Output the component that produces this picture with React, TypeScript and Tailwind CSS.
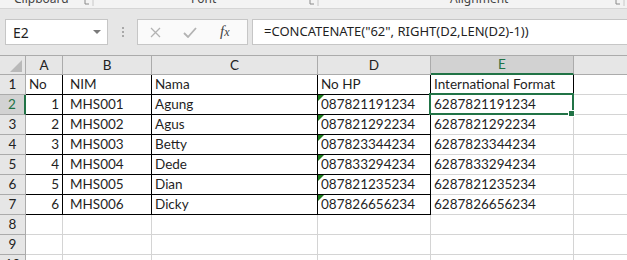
import React from 'react';

const cols = [
  { key: 'A', w: 37 },
  { key: 'B', w: 89 },
  { key: 'C', w: 166 },
  { key: 'D', w: 113 },
  { key: 'E', w: 143 },
];

const rows: string[][] = [
  ['No', 'NIM', 'Nama', 'No HP', 'International Format'],
  ['1', 'MHS001', 'Agung', '087821191234', '6287821191234'],
  ['2', 'MHS002', 'Agus', '087821292234', '6287821292234'],
  ['3', 'MHS003', 'Betty', '087823344234', '6287823344234'],
  ['4', 'MHS004', 'Dede', '087833294234', '6287833294234'],
  ['5', 'MHS005', 'Dian', '087821235234', '6287821235234'],
  ['6', 'MHS006', 'Dicky', '087826656234', '6287826656234'],
  ['', '', '', '', ''],
  ['', '', '', '', ''],
  ['', '', '', '', ''],
];

const Launcher = () => (
  <svg width="10" height="6" viewBox="0 0 10 6" className="shrink-0">
    <path d="M1 0 V4 H5" stroke="#8a8a8a" strokeWidth="1" fill="none" />
    <path d="M9 0 V6" stroke="#c8c8c8" strokeWidth="1" />
  </svg>
);

const Cell: React.FC<{ r: number; c: number; text: string }> = ({ r, c, text }) => {
  // black borders on A1:D7, plus right edge of E1
  const boxed = r <= 6 && c <= 3;
  const rightBlack = boxed || (r === 0 && c === 4);
  const bottomBlack = boxed;
  const numeric = c === 0 && r > 0;
  const bPad = c === 1 ? 'pl-[7px]' : 'pl-[3px]';
  return (
    <div
      className={`relative h-[20px] flex items-end pb-[2px] border-r border-b whitespace-nowrap overflow-visible ${numeric ? 'justify-end pr-[3px]' : bPad} ${rightBlack ? 'border-r-black' : 'border-r-[#d4d4d4]'} ${bottomBlack ? 'border-b-black' : 'border-b-[#d4d4d4]'}`}
    >
      {c === 3 && r >= 1 && r <= 6 && (
        <svg width="6" height="6" viewBox="0 0 6 6" className="absolute left-0 top-0">
          <polygon points="0,0 6,0 0,6" fill="#1d7a1d" />
        </svg>
      )}
      <span className="leading-[15px]">{text}</span>
      {c === 4 && r === 1 && (
        <>
          <div className="absolute z-10 -left-[2px] -top-[2px] -right-[1px] -bottom-[1px] border-2 border-[#217346] pointer-events-none" />
          <div className="absolute z-20 left-[137px] top-[15px] w-[7px] h-[7px] bg-[#217346] border border-white" />
        </>
      )}
    </div>
  );
};

export default function App() {
  return (
    <div className="w-[627px] h-[260px] overflow-hidden bg-white text-[#1f1f1f]" style={{ fontFamily: 'Lato, "Liberation Sans", sans-serif' }}>
      {/* ribbon group labels, clipped by the window edge */}
      <div className="h-[9px] bg-[#f3f3f3] border-b border-[#d5d5d5] overflow-hidden flex text-[12px] text-[#444]" style={{ fontFamily: '"Noto Sans", "Liberation Sans", sans-serif' }}>
        <div className="w-[96px] flex items-start justify-between pl-[14px] pr-[2px]">
          <span className="leading-[12px] -mt-[7px]">Clipboard</span>
          <Launcher />
        </div>
        <div className="w-[225px] flex items-start justify-between pl-[95px] pr-[2px]">
          <span className="leading-[12px] -mt-[7px]">Font</span>
          <Launcher />
        </div>
        <div className="flex-1 flex items-start justify-between pl-[129px] pr-[2px]">
          <span className="leading-[12px] -mt-[7px]">Alignment</span>
          <Launcher />
        </div>
      </div>

      {/* name box + formula bar */}
      <div className="h-[46px] bg-[#e6e6e6] pt-[10px] flex items-start">
        <div className="ml-[5px] w-[103px] h-[26px] bg-white border border-[#c6c6c6] flex items-center justify-between pl-[7px] pr-[6px] text-[14px]" style={{ fontFamily: '"Noto Sans", sans-serif' }}>
          <span>E2</span>
          <svg width="8" height="4" viewBox="0 0 8 4"><polygon points="0,0 8,0 4,4" fill="#7a7a7a" /></svg>
        </div>
        <div className="w-[29px] h-[26px] flex flex-col items-center justify-center gap-[2px]">
          <span className="w-[2px] h-[2px] bg-[#a8a8a8]" />
          <span className="w-[2px] h-[2px] bg-[#a8a8a8]" />
          <span className="w-[2px] h-[2px] bg-[#a8a8a8]" />
        </div>
        <div className="w-[111px] h-[26px] bg-[#fafafa] border border-[#c6c6c6] flex items-center pl-[12px] gap-[22px]">
          <svg width="11" height="11" viewBox="0 0 11 11"><path d="M1 1 L10 10 M10 1 L1 10" stroke="#b3b3b3" strokeWidth="1.3" /></svg>
          <svg width="14" height="11" viewBox="0 0 14 11"><path d="M1 6 L5 10 L13 1" stroke="#b3b3b3" strokeWidth="1.8" fill="none" /></svg>
          <span className="italic text-[15px] leading-[15px] text-[#444] ml-[1px]" style={{ fontFamily: '"Liberation Serif", serif' }}>
            f<span className="text-[12px]">x</span>
          </span>
        </div>
        <div className="ml-[4px] flex-1 h-[26px] bg-white border border-r-0 border-[#c6c6c6] flex items-center pl-[11px] text-[13px] whitespace-nowrap" style={{ fontFamily: '"Noto Sans", sans-serif' }}>
          =CONCATENATE("62", RIGHT(D2,LEN(D2)-1))
        </div>
      </div>

      {/* sheet grid */}
      <div className="grid text-[13.5px]" style={{ gridTemplateColumns: '26px 37px 89px 166px 113px 143px 1fr' }}>
        {/* header row */}
        <div className="h-[20px] bg-[#e6e6e6] border-t border-b border-r border-[#ababab] flex items-end justify-end pr-[3px] pb-[2px]">
          <svg width="12" height="12" viewBox="0 0 12 12"><polygon points="12,0 12,12 0,12" fill="#b9b9b9" /></svg>
        </div>
        {cols.map((c) =>
          c.key === 'E' ? (
            <div key={c.key} className="h-[20px] bg-[#d2d2d2] border-t border-t-[#ababab] border-r border-r-[#ababab] border-b-2 border-b-[#217346] flex items-center justify-center text-[#217346]">
              {c.key}
            </div>
          ) : (
            <div key={c.key} className="h-[20px] bg-[#e6e6e6] border-t border-b border-r border-[#ababab] flex items-center justify-center text-[#222]">
              {c.key}
            </div>
          )
        )}
        <div className="h-[20px] bg-[#e6e6e6] border-t border-b border-[#ababab]" />

        {rows.map((row, r) => (
          <React.Fragment key={r}>
            <div
              className={`h-[20px] flex items-center justify-center border-b border-b-[#ababab] ${r === 1 ? 'bg-[#d2d2d2] border-r-2 border-r-[#217346] text-[#217346]' : 'bg-[#e6e6e6] border-r border-r-[#ababab] text-[#222]'}`}
            >
              {r + 1}
            </div>
            {row.map((t, c) => (
              <Cell key={c} r={r} c={c} text={t} />
            ))}
            <div className="h-[20px] border-b border-[#d4d4d4]" />
          </React.Fragment>
        ))}
      </div>
    </div>
  );
}
